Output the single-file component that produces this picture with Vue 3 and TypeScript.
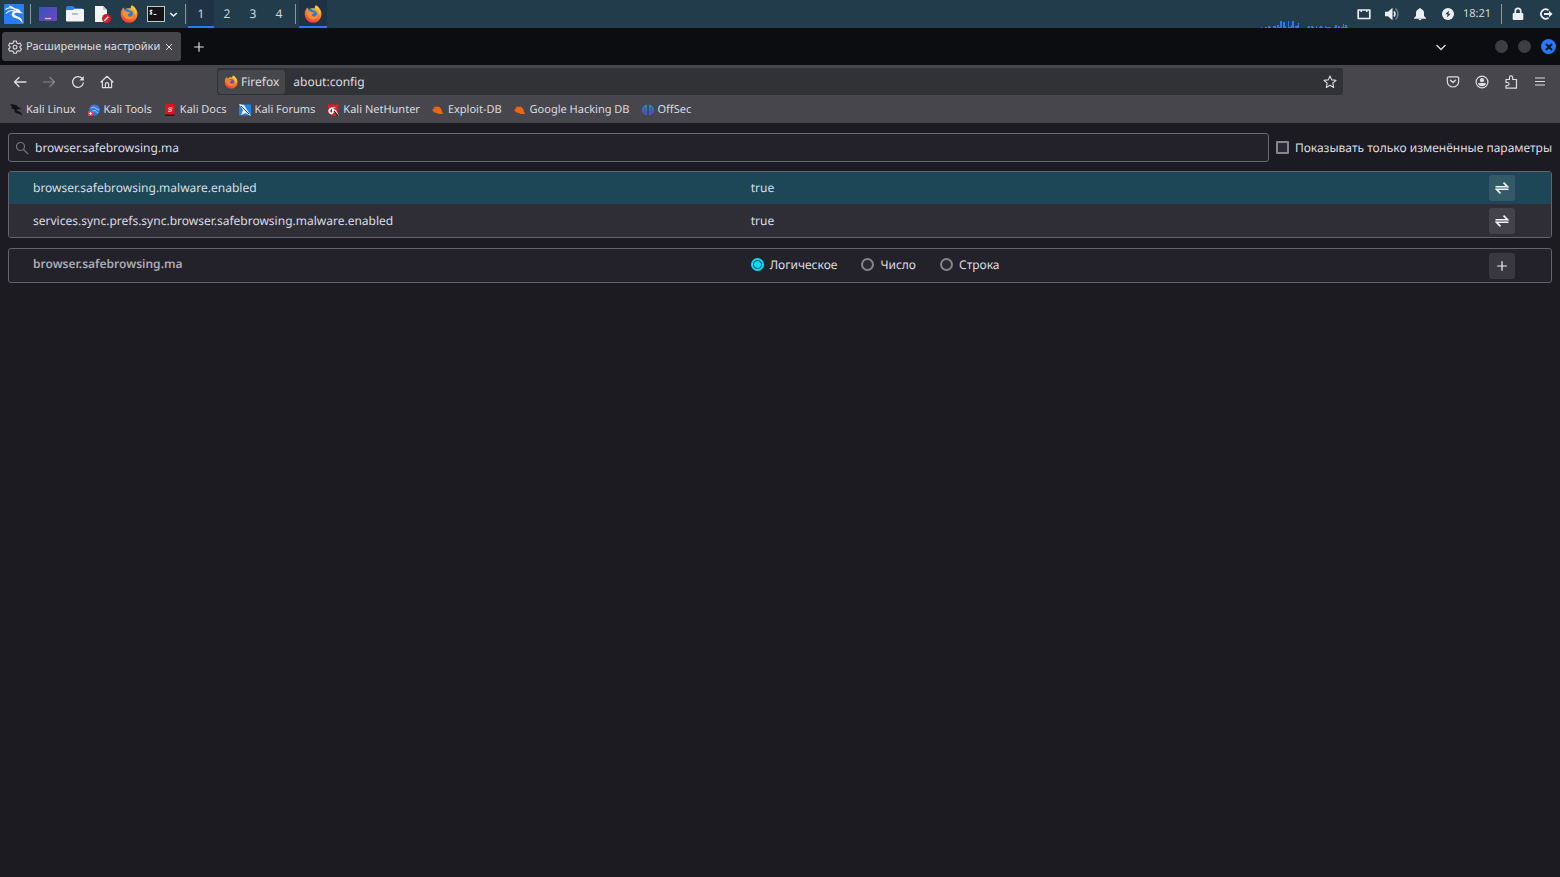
<script setup lang="ts">
import { ref } from 'vue'

interface Pref {
  name: string
  value: boolean
  selected: boolean
}

const query = ref('browser.safebrowsing.ma')
const address = ref('about:config')
const onlyModified = ref(false)
const newType = ref('bool')
const workspace = ref(1)

const launchers = [
  { icon: 'desktop', label: 'Desktop' },
  { icon: 'folder', label: 'Files' },
  { icon: 'editor', label: 'Text Editor' },
  { icon: 'firefox', label: 'Firefox' },
  { icon: 'terminal', label: 'Terminal' },
]
const trayIcons = [
  { icon: 'display', label: 'Display' },
  { icon: 'volume', label: 'Volume' },
  { icon: 'bell', label: 'Notifications' },
  { icon: 'power', label: 'Power' },
]
const navButtons = [
  { icon: 'back', label: 'Back' },
  { icon: 'forward', label: 'Forward' },
  { icon: 'reload', label: 'Reload' },
  { icon: 'home', label: 'Home' },
]
const toolButtons = [
  { icon: 'pocket', label: 'Pocket' },
  { icon: 'account', label: 'Account' },
  { icon: 'puzzle', label: 'Extensions' },
  { icon: 'menu', label: 'Menu' },
]
const bookmarks = [
  { icon: 'b-linux', title: 'Kali Linux' },
  { icon: 'b-tools', title: 'Kali Tools' },
  { icon: 'b-docs', title: 'Kali Docs' },
  { icon: 'b-forums', title: 'Kali Forums' },
  { icon: 'b-hunter', title: 'Kali NetHunter' },
  { icon: 'b-exploit', title: 'Exploit-DB' },
  { icon: 'b-exploit', title: 'Google Hacking DB' },
  { icon: 'b-offsec', title: 'OffSec' },
]
const prefs = ref<Pref[]>([
  { name: 'browser.safebrowsing.malware.enabled', value: true, selected: true },
  { name: 'services.sync.prefs.sync.browser.safebrowsing.malware.enabled', value: true, selected: false },
])
const types = [
  { id: 'bool', label: 'Логическое' },
  { id: 'number', label: 'Число' },
  { id: 'string', label: 'Строка' },
]
const load = [1, 0, 0, 1, 0, 2, 1, 0, 2, 2, 0, 3, 1, 7, 0, 6, 2, 0, 7, 1, 3, 7, 0, 2, 3, 5, 0, 0, 0, 0, 0, 1, 2, 0, 2, 1, 0, 2, 0, 1, 2, 1, 0, 2, 1, 1, 1, 0, 0, 1, 3, 0, 2, 0, 1, 4, 1, 3, 1]
</script>

<template>
  <svg class="defs" width="0" height="0" aria-hidden="true">
    <defs>
      <linearGradient id="gFlame" x1="0.8" y1="0" x2="0.3" y2="1">
        <stop offset="0" stop-color="#ffdf3c" /><stop offset="0.45" stop-color="#ff8a1c" /><stop offset="1" stop-color="#f5324a" />
      </linearGradient>
      <linearGradient id="gDesk" x1="0" y1="0" x2="1" y2="1">
        <stop offset="0" stop-color="#3454c4" /><stop offset="1" stop-color="#7544b8" />
      </linearGradient>
      <linearGradient id="gOff" x1="0" y1="0" x2="0" y2="1">
        <stop offset="0" stop-color="#149fba" /><stop offset="1" stop-color="#5b3fe0" />
      </linearGradient>
    </defs>
    <symbol id="dragon" viewBox="0 0 20 20">
      <path d="M1.500 5.500C4 3.500 8 3.500 11 5.500M2 9.500C4.500 6.500 8 6 11 7M5 2Q8 2.500 10.500 5" fill="none" stroke="currentColor" stroke-width="1.100" />
      <path d="M9.500 4.800C13 4 16 5.500 16.500 7.500L19 9.500L15 9C12 8.500 10 9 10.300 10.500C11.500 12.500 15 12 17 14.500C18.200 16 18.500 17.500 18.500 19.500C17 16.500 14.500 14.500 11.500 14C8 13.200 7 11 8 9C8.800 7.500 10 7 12 7Z" fill="currentColor" />
    </symbol>
    <symbol id="kali" viewBox="0 0 20 20">
      <rect width="20" height="20" rx="1" fill="#267df5" />
      <use href="#dragon" color="#fff" />
    </symbol>
    <symbol id="desktop" viewBox="0 0 18 18">
      <rect y="2" width="18" height="14" rx="1" fill="url(#gDesk)" />
      <path d="M6 13.500h6" stroke="#d9d4f4" stroke-width="1.200" />
    </symbol>
    <symbol id="folder" viewBox="0 0 18 18">
      <path d="M0 3q0-2 2-2h5l2 2h6q2 0 2 2v5H0z" fill="#2f7de8" />
      <path d="M0 6q0-1 1-1h6l1-1h9q1 0 1 1v10.500q0 1-1 1H1q-1 0-1-1z" fill="#f2f3f5" />
      <path d="M6 9h6" stroke="#b6bcc4" stroke-width="2" />
    </symbol>
    <symbol id="editor" viewBox="0 0 18 18">
      <path d="M2 1h8l4 4v12H2z" fill="#f5f5f5" /><path d="M10 1v4h4z" fill="#c8ccd0" />
      <circle cx="13.500" cy="13.500" r="4.500" fill="#d81b2c" /><path d="M11.300 15.700l4-4" stroke="#fff" stroke-width="1.400" />
    </symbol>
    <symbol id="firefox" viewBox="0 0 18 18">
      <path d="M9 17.500A8 8 0 0 1 1 9C1 6 2 4 3.500 2.500L5 5C6 3.500 7 3 8.500 3L10 3.500L11.500 .5C15 2 17.300 5.500 17.300 9A8 8 0 0 1 9 17.500Z" fill="url(#gFlame)" />
      <circle cx="9.400" cy="9" r="3.800" fill="#7542e5" />
      <path d="M3 8C5 5.500 8 5.500 10 7.300C8.500 7.600 7.500 8.500 7.500 9.500C8.500 11.500 11 11.800 13.300 10.200C13 14 9.500 15 7 13.500C4.500 12.500 3 11 3 8Z" fill="#ff8a1e" />
      <path d="M11.500.5C14 3.500 16 6 15 10C17 8 16.500 3 11.500.5Z" fill="#ffd93d" />
    </symbol>
    <symbol id="firefox-alt" viewBox="0 0 18 18">
      <path d="M9 17.700A8.300 8.300 0 0 1 .7 9C.7 6 2 4 3.500 2.500L5 5C6 3.500 7 3 8.500 3L10.500 3.500L11.500.3C15 2 17.500 5.500 17.500 9A8.300 8.300 0 0 1 9 17.700Z" fill="url(#gFlame)" />
      <path d="M3.300 3.500L5.500 4.500L8.500 3L8.300 5L12 6Q14 8.500 12 11Q10 12.800 7.500 11.500L6 9Z" fill="#2f7fdf" />
      <path d="M2.300 6.500Q5 5 7 7L10.500 7.600L8 9.200Q7 10.500 9 11.500Q12 12.500 13.500 10Q13.500 15 8.500 14.500Q3 13.500 2.300 6.500Z" fill="#ff9128" />
      <path d="M11.500.3C14 3.500 16 6 15 10C17 8 16.500 3 11.500.3Z" fill="#ffd93d" />
    </symbol>
    <symbol id="terminal" viewBox="0 0 18 18">
      <rect x="0.500" y="1.500" width="17" height="15" fill="#141414" stroke="#c5c8ca" />
      <path d="M5.500 5.500H3.500q-1 0-.5 1l2 1.200q.5 1-.5 1.100H2.500M4 4.500v5.500M6.500 9.500h3" fill="none" stroke="#fff" stroke-width="0.900" />
    </symbol>
    <symbol id="chev" viewBox="0 0 12 12"><path d="M1.500 4L6 8.500L10.500 4" fill="none" stroke="currentColor" stroke-width="1.300" /></symbol>
    <symbol id="chev-bold" viewBox="0 0 9 9"><path d="M1.200 3L4.500 6L7.800 3" fill="none" stroke="currentColor" stroke-width="1.600" /></symbol>
    <symbol id="display" viewBox="0 0 14 14"><path d="M1.200 3h11.600v8.500H1.200z" fill="none" stroke="currentColor" stroke-width="1.700" stroke-linejoin="round" /><path d="M3.500 3H5v2H3.500zM9 3h1.500v2H9z" fill="currentColor" /></symbol>
    <symbol id="volume" viewBox="0 0 14 14"><path d="M0 4.800h3l4.500-4v12.400L3 9.200H0z" fill="currentColor" /><path d="M9 4.500q2 2.500 0 5" fill="none" stroke="currentColor" stroke-width="1.500" /><path d="M10.500 1.500q5 5.500 0 11" fill="none" stroke="#70828e" stroke-width="1.400" /></symbol>
    <symbol id="bell" viewBox="0 0 14 14"><path d="M7 1q1 0 1 1q3 .8 3 4v3l2 2v.8H1V11l2-2V6q0-3.200 3-4q0-1 1-1zM5.500 12h3q-.5 1.200-1.500 1.200T5.500 12z" fill="currentColor" /></symbol>
    <symbol id="power" viewBox="0 0 14 14"><circle cx="7" cy="7" r="6" fill="currentColor" /><path d="M8 3.500L4.300 7.300H6.500L6 10.500L9.700 6.700H7.500z" fill="#233c4c" /></symbol>
    <symbol id="lock" viewBox="0 0 14 14"><path d="M4.300 6V4a2.700 2.700 0 0 1 5.400 0v2" fill="none" stroke="currentColor" stroke-width="1.700" /><rect x="1.700" y="6" width="10.600" height="7" rx="1" fill="currentColor" /></symbol>
    <symbol id="logout" viewBox="0 0 14 14"><path d="M9.500 3.200A4.700 4.700 0 1 0 9.500 10.800" fill="none" stroke="currentColor" stroke-width="1.800" /><path d="M5 6.100h5V3.800L13.500 7L10 10.200V7.900H5z" fill="currentColor" /></symbol>
    <symbol id="gear" viewBox="0 0 14 14"><path d="M5.700 1h2.600l.5 1.900l1.400.8l1.900-.6l1.300 2.300L12 6.700v1l1.400 1.300l-1.300 2.200l-1.900-.5l-1.400.8L8.300 13.300H5.700l-.5-1.800l-1.400-.8l-1.900.5L.6 9L2 7.700v-1L.6 5.400l1.300-2.300l1.900.6l1.400-.8z" fill="none" stroke="currentColor" stroke-width="1.100" stroke-linejoin="round" /><circle cx="7" cy="7.200" r="1.900" fill="none" stroke="currentColor" stroke-width="1.100" /></symbol>
    <symbol id="plus" viewBox="0 0 12 12"><path d="M6 1.200v9.600M1.200 6h9.600" stroke="currentColor" stroke-width="1.200" /></symbol>
    <symbol id="close" viewBox="0 0 12 12"><path d="M3 3l6 6M9 3L3 9" stroke="currentColor" stroke-width="1" /></symbol>
    <symbol id="back" viewBox="0 0 14 14"><path d="M13 7H1.500M6 2.500L1.500 7L6 11.500" fill="none" stroke="currentColor" stroke-width="1.300" stroke-linecap="round" stroke-linejoin="round" /></symbol>
    <symbol id="forward" viewBox="0 0 14 14"><path d="M1.500 7H12.500M8 2.500L12.500 7L8 11.500" fill="none" stroke="currentColor" stroke-width="1.200" stroke-linecap="round" stroke-linejoin="round" /></symbol>
    <symbol id="reload" viewBox="0 0 14 14"><path d="M12.300 8A5.400 5.400 0 1 1 11.300 3.700" fill="none" stroke="currentColor" stroke-width="1.300" stroke-linecap="round" /><path d="M12.800 1v4.500H8.300z" fill="currentColor" /></symbol>
    <symbol id="home" viewBox="0 0 14 14"><path d="M1 7L7 1.300L13 7M2.400 6v6.600h9.200V6M5.400 12.500V9.300q0-1.600 1.600-1.600t1.600 1.600v3.200" fill="none" stroke="currentColor" stroke-width="1.200" stroke-linecap="round" stroke-linejoin="round" /></symbol>
    <symbol id="star" viewBox="0 0 14 14"><path d="M7 1l1.700 3.900l4.300.4l-3.200 2.900l.9 4.300L7 10.300l-3.700 2.200l.9-4.300L1 5.300l4.300-.4z" fill="none" stroke="currentColor" stroke-width="1.100" stroke-linejoin="round" /></symbol>
    <symbol id="pocket" viewBox="0 0 14 14"><path d="M2.500 1.800h9q1.200 0 1.200 1.200V6.300a5.700 5.700 0 0 1-11.400 0V3Q1.300 1.800 2.500 1.800z" fill="none" stroke="currentColor" stroke-width="1.200" /><path d="M4.500 5.300L7 7.600l2.500-2.300" fill="none" stroke="currentColor" stroke-width="1.400" stroke-linecap="round" stroke-linejoin="round" /></symbol>
    <symbol id="account" viewBox="0 0 14 14"><circle cx="7" cy="7" r="5.900" fill="none" stroke="currentColor" stroke-width="1.200" /><circle cx="7" cy="5.200" r="2.100" fill="currentColor" /><path d="M3.200 8h7.600q0 3.200-3.800 3.200T3.200 8z" fill="currentColor" /></symbol>
    <symbol id="puzzle" viewBox="0 0 14 14"><path d="M2 4.500H5.500V2.500a1.600 1.600 0 0 1 3.200 0v2H12.500v8.700H2V10.500h1.500a1.500 1.500 0 0 0 0-3H2z" fill="none" stroke="currentColor" stroke-width="1.200" stroke-linejoin="round" /></symbol>
    <symbol id="menu" viewBox="0 0 14 14"><path d="M2.500 3h9M2.500 6.500h9M2.500 10h9" stroke="currentColor" stroke-width="1.100" stroke-linecap="round" /></symbol>
    <symbol id="search" viewBox="0 0 14 14"><circle cx="5.500" cy="5.500" r="4" fill="none" stroke="currentColor" stroke-width="1.200" /><path d="M8.500 8.500L13 13" stroke="currentColor" stroke-width="1.200" /></symbol>
    <symbol id="swap" viewBox="0 0 14 14"><path d="M.5 5.700H12.500L8.500 1.600M13.500 8.300H1.500L5.500 12.400" fill="none" stroke="currentColor" stroke-width="1.600" /></symbol>
    <symbol id="b-linux" viewBox="0 0 12 12"><path d="M0 .5C4 0 7 1 8 3L11.500 5L7 5.500C6 6 7 7 9 7.500C11.500 8 12 10 12 12C10.500 9.500 8 10 6 9C4 7.500 5 5.500 3.500 5C2 4.500 1 5 1 5L2 3z" fill="#141416" /></symbol>
    <symbol id="b-tools" viewBox="0 0 12 12"><circle cx="6.500" cy="6" r="5.500" fill="#3179e8" /><path d="M3 4Q6 2 8 4.500L11 6M4 7q3-2 6 2" fill="none" stroke="#a9c8f6" /><rect y="7" width="5" height="5" rx="1" fill="#e2434b" /><path d="M1 9.500h3M2.500 8v3" stroke="#fff" stroke-width="0.800" /></symbol>
    <symbol id="b-docs" viewBox="0 0 12 12"><path d="M1 0H10.500v12H1z" fill="#e01220" /><path d="M1 10.500H10.500V12H1z" fill="#24191c" /><path d="M8.500 4L5.500 3.800Q3.500 4.500 5 5.500L7.500 5.800Q8.500 7 6.500 7.300H4" fill="none" stroke="#fff" stroke-width="0.900" /></symbol>
    <symbol id="b-forums" viewBox="0 0 12 12"><path d="M0 .5h12v11H0z" fill="#1f83ea" /><path d="M0 0L5 1L12 12L6.500 9L2 11L4 6z" fill="#e9f1fb" /><path d="M2 2L10 10" stroke="#23282f" stroke-width="0.900" /></symbol>
    <symbol id="b-hunter" viewBox="0 0 12 12"><path d="M1 .5h11L10 8L12 12H7L1 9z" fill="#df1f2e" /><path d="M9 3L4 3.500Q0 5.500 2 9Q5 12 6.500 8.500L8 9L12 12L9 6L6 5z" fill="#fff" /><path d="M5 5.500q-2 1.500 0 2.500M7 7l4 5" fill="none" stroke="#2a2023" stroke-width="1.300" /></symbol>
    <symbol id="b-exploit" viewBox="0 0 12 12"><path d="M0 6L1.500 5L2.500 2.500L4.500 3L6.500 2.500L9 4.500L10 7.500L11 10H7L5 9L2.500 8.500z" fill="#f26411" /><path d="M1 3l2 1M6 9l-1 1.500" stroke="#9c4a1c" /></symbol>
    <symbol id="b-offsec" viewBox="0 0 12 12"><path d="M5 .5V11.500Q0 10 0 6T5 .5M7 .5V11.500Q12 10 12 6T7 .5" fill="url(#gOff)" /><path d="M2.700 3v6M9.300 3v6" stroke="#3d4462" stroke-width="0.800" /></symbol>
  </svg>

  <div class="screen">
    <header class="panel">
      <button class="pbtn kali" aria-label="Applications"><svg class="i20"><use href="#kali" /></svg></button>
      <span class="sep"></span>
      <div class="launchers">
        <button v-for="l in launchers" :key="l.icon" class="pbtn" :aria-label="l.label">
          <svg class="i18"><use :href="l.icon === 'firefox' ? '#firefox-alt' : '#' + l.icon" /></svg>
        </button>
      </div>
      <button class="pbtn more" aria-label="More terminals"><svg class="i9"><use href="#chev-bold" /></svg></button>
      <span class="sep"></span>
      <nav class="spaces">
        <button v-for="n in 4" :key="n" class="space" :class="{ active: workspace === n }" @click="workspace = n">{{ n }}</button>
      </nav>
      <span class="sep"></span>
      <button class="task" aria-label="Firefox window"><svg class="i18"><use href="#firefox-alt" /></svg></button>
      <div class="graph"><i v-for="(h, k) in load" :key="k" :style="{ height: h + 'px' }"></i></div>
      <div class="tray">
        <button v-for="t in trayIcons" :key="t.icon" class="pbtn" :aria-label="t.label"><svg class="i14"><use :href="'#' + t.icon" /></svg></button>
      </div>
      <time class="clock">18:21</time>
      <span class="sep"></span>
      <div class="session">
        <button class="pbtn" aria-label="Lock"><svg class="i14"><use href="#lock" /></svg></button>
        <button class="pbtn" aria-label="Log out"><svg class="i14"><use href="#logout" /></svg></button>
      </div>
    </header>

    <div class="tabs">
      <div class="tab">
        <svg class="i14"><use href="#gear" /></svg>
        <span class="title">Расширенные настройки</span>
        <button aria-label="Close tab"><svg class="i12"><use href="#close" /></svg></button>
      </div>
      <button class="newtab" aria-label="New tab"><svg class="i12"><use href="#plus" /></svg></button>
      <button class="alltabs" aria-label="List all tabs"><svg class="i12"><use href="#chev" /></svg></button>
      <div class="winbtns">
        <button aria-label="Minimize"></button>
        <button aria-label="Maximize"></button>
        <button class="quit" aria-label="Close"><svg class="i14" viewBox="0 0 14 14"><path d="M4 4l6 6M10 4l-6 6" stroke="#0c1626" stroke-width="2" /></svg></button>
      </div>
    </div>

    <div class="nav">
      <button v-for="b in navButtons" :key="b.icon" class="nbtn" :disabled="b.icon === 'forward'" :aria-label="b.label">
        <svg class="i14"><use :href="'#' + b.icon" /></svg>
      </button>
      <div class="urlbar">
        <button class="identity"><svg class="i14"><use href="#firefox" /></svg>Firefox</button>
        <input v-model="address" type="text" aria-label="Address" />
        <button class="nbtn bookmark" aria-label="Bookmark"><svg class="i14"><use href="#star" /></svg></button>
      </div>
      <button v-for="b in toolButtons" :key="b.icon" class="nbtn" :aria-label="b.label">
        <svg class="i14"><use :href="'#' + b.icon" /></svg>
      </button>
    </div>

    <nav class="bookmarks">
      <a v-for="b in bookmarks" :key="b.title" href="#"><svg class="i12"><use :href="'#' + b.icon" /></svg>{{ b.title }}</a>
    </nav>

    <main class="config">
      <div class="toolbar">
        <div class="searchbox">
          <svg class="i14"><use href="#search" /></svg>
          <input v-model="query" type="text" aria-label="Search" />
        </div>
        <label class="only"><input v-model="onlyModified" type="checkbox" />Показывать только изменённые параметры</label>
      </div>

      <div class="box list">
        <table>
          <tbody>
            <tr v-for="p in prefs" :key="p.name" :class="{ selected: p.selected }">
              <th scope="row">{{ p.name }}</th>
              <td>{{ p.value }}</td>
              <td class="action"><button aria-label="Toggle" @click="p.value = !p.value"><svg class="i14"><use href="#swap" /></svg></button></td>
            </tr>
          </tbody>
        </table>
      </div>

      <div class="box add">
        <table>
          <tbody>
            <tr>
              <th scope="row">{{ query }}</th>
              <td>
                <div class="types">
                  <label v-for="t in types" :key="t.id"><input v-model="newType" type="radio" name="type" :value="t.id" />{{ t.label }}</label>
                </div>
              </td>
              <td class="action"><button aria-label="Add"><svg class="i12"><use href="#plus" /></svg></button></td>
            </tr>
          </tbody>
        </table>
      </div>
    </main>
  </div>
</template>

<style>
body {
  background: #1c1b22;
}
</style>

<style scoped>
.defs {
  position: absolute;
}
.screen {
  min-height: 100vh;
  background: #1c1b22;
  color: #dcdce2;
  font: 12px/16px "Noto Sans", "Open Sans", sans-serif;
  text-rendering: geometricPrecision;
}
.screen * {
  box-sizing: border-box;
}
button {
  display: flex;
  align-items: center;
  justify-content: center;
  padding: 0;
  border: 0;
  background: none;
  color: inherit;
  font: inherit;
  text-rendering: inherit;
}
input {
  margin: 0;
  color: inherit;
  font: inherit;
  text-rendering: inherit;
}
svg {
  display: block;
  flex: none;
}
.i9 { width: 9px; height: 9px; }
.i12 { width: 12px; height: 12px; }
.i14 { width: 14px; height: 14px; }
.i18 { width: 18px; height: 18px; }
.i20 { width: 20px; height: 20px; }

.panel {
  display: flex;
  align-items: center;
  height: 28px;
  padding: 0 7px 0 4px;
  background: #233c4c;
  color: #eceff1;
}
.sep {
  width: 1px;
  height: 20px;
  background: #8b989f;
}
.kali {
  margin-right: 6px;
}
.launchers {
  display: flex;
  gap: 9px;
  margin-left: 8px;
}
.more {
  margin: 0 7px 0 4px;
}
.spaces {
  display: flex;
  margin: 0 3px 0 2px;
}
.space,
.task {
  width: 26px;
  height: 28px;
  color: #cfd6da;
}
.space.active,
.task {
  background: #203346;
  box-shadow: inset 0 -2px #2777ff;
}
.task {
  width: 28px;
  margin-left: 3px;
}
.graph {
  display: flex;
  align-items: flex-end;
  width: 88px;
  height: 28px;
  margin: 0 8px 0 auto;
}
.graph i {
  flex: 1;
  background: #2777ff;
}
.tray {
  display: flex;
  gap: 14px;
}
.clock {
  margin: 0 10px 0 8px;
  color: #d3dade;
  font-size: 11px;
}
.session {
  display: flex;
  gap: 14px;
  margin-left: 9px;
}

.tabs {
  display: flex;
  align-items: center;
  height: 37px;
  padding: 0 4px 0 2px;
  background: #0c0d10;
}
.tab {
  display: flex;
  align-items: center;
  width: 179px;
  height: 29px;
  padding: 0 6px;
  border-radius: 3px;
  background: #45454a;
}
.title {
  flex: 1;
  margin-left: 4px;
  font-size: 11px;
  white-space: nowrap;
}
.newtab {
  margin-left: 12px;
}
.alltabs {
  margin: 0 48px 0 auto;
}
.winbtns {
  display: flex;
  align-items: center;
  gap: 10px;
}
.winbtns button {
  width: 13px;
  height: 13px;
  border-radius: 50%;
  background: #3c3e44;
}
.winbtns .quit {
  width: 15px;
  height: 15px;
  background: #2777ff;
}

.nav {
  display: flex;
  align-items: center;
  height: 33px;
  padding: 0 6px 0 5px;
  background: #46464c;
}
.nbtn {
  width: 29px;
  height: 26px;
}
.nbtn:disabled {
  color: #85858b;
}
.urlbar {
  display: flex;
  flex: 1;
  align-items: center;
  height: 27px;
  margin: 0 95px 0 96px;
  padding: 1px;
  border-radius: 3px;
  background: #313235;
}
.identity {
  gap: 3px;
  height: 24px;
  padding: 0 6px;
  border-radius: 3px;
  background: #46474b;
}
.urlbar input {
  flex: 1;
  min-width: 0;
  padding: 0 8px;
  border: 0;
  background: none;
}
.bookmark {
  width: 24px;
}

.bookmarks {
  display: flex;
  gap: 12px;
  height: 25px;
  padding: 0 10px 1px;
  background: #46464c;
  font-size: 11px;
}
.bookmarks a {
  display: flex;
  align-items: center;
  gap: 4px;
  color: #dcdce0;
  text-decoration: none;
  white-space: nowrap;
}

.config {
  padding: 10px 8px;
}
.toolbar {
  display: flex;
  align-items: center;
  gap: 7px;
}
.searchbox {
  display: flex;
  flex: 1;
  align-items: center;
  gap: 6px;
  height: 29px;
  padding: 0 6px;
  border: 1px solid #686870;
  border-radius: 3px;
  background: #23222b;
}
.searchbox svg {
  color: #75757e;
}
.searchbox input {
  flex: 1;
  padding: 0;
  border: 0;
  background: none;
}
.only,
.types,
.types label {
  display: flex;
  align-items: center;
  gap: 6px;
}
.only input {
  appearance: none;
  width: 13px;
  height: 13px;
  border: 2px solid #85858c;
  border-radius: 1px;
  background: #2a2931;
}
.box {
  margin-top: 9px;
  border: 1px solid #64646d;
  border-radius: 3px;
  background: #23222b;
  overflow: hidden;
}
.add {
  margin-top: 10px;
}
table {
  width: 100%;
  border-collapse: collapse;
  table-layout: fixed;
}
tr {
  height: 33px;
}
.list tr {
  background: #2f2e37;
}
.list tr.selected {
  height: 32px;
  background: #1d4757;
}
th,
td {
  padding: 0;
  text-align: left;
  vertical-align: middle;
}
th {
  width: 48.1%;
  padding-left: 24px;
  font-weight: 400;
}
.add th {
  padding-bottom: 4px;
  color: #aaaab2;
  font-weight: 600;
}
.action {
  width: 62px;
}
.action button {
  width: 26px;
  height: 26px;
  border-radius: 3px;
  background: rgba(255, 255, 255, 0.1);
}
.action svg {
  color: #f4f4f8;
}
.types {
  gap: 24px;
  padding-bottom: 2px;
}
.types input {
  appearance: none;
  width: 13px;
  height: 13px;
  border: 2px solid #85858c;
  border-radius: 50%;
  background: #2a2931;
}
.types input:checked {
  border-color: #00ddff;
  background: radial-gradient(circle, #00ddff 3px, #184653 4px);
}
</style>
